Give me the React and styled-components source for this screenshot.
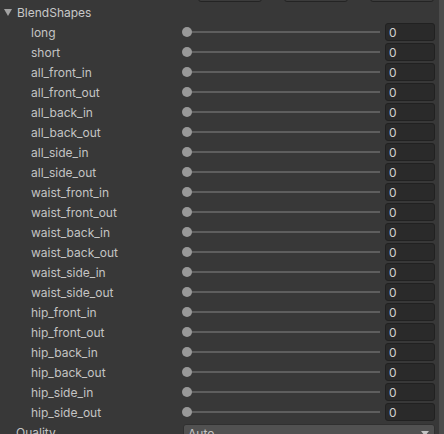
import React from 'react'
import styled, { createGlobalStyle } from 'styled-components'

const shapes = [
    'long', 'short',
    'all_front_in', 'all_front_out', 'all_back_in', 'all_back_out', 'all_side_in', 'all_side_out',
    'waist_front_in', 'waist_front_out', 'waist_back_in', 'waist_back_out', 'waist_side_in', 'waist_side_out',
    'hip_front_in', 'hip_front_out', 'hip_back_in', 'hip_back_out', 'hip_side_in', 'hip_side_out',
]

const GlobalStyle = createGlobalStyle`
    html, body {
        margin: 0;
        padding: 0;
        background: #383838;
        overflow: hidden;
    }
    body {
        font-family: Inter, "Noto Sans", "DejaVu Sans", sans-serif;
        font-size: 12px;
        color: #c4c4c4;
    }
`

export default function App() {
    return (
        <>
            <GlobalStyle />
            <Window>
                <Inspector>
                    <ButtonStrip>
                        <StripButton />
                        <StripButton />
                        <StripButton />
                    </ButtonStrip>

                    <Foldout>
                        <Arrow viewBox="0 0 8 7">
                            <polygon points="0,0 8,0 4,7" fill="#a3a3a3" />
                        </Arrow>
                        BlendShapes
                    </Foldout>

                    {shapes.map((name) => (
                        <Row key={name}>
                            <Label>{name}</Label>
                            <Slider>
                                <Knob />
                                <Track />
                            </Slider>
                            <NumberField>0</NumberField>
                        </Row>
                    ))}

                    <Row>
                        <Label $indent={16}>Quality</Label>
                        <Dropdown>
                            <span>Auto</span>
                            <Caret viewBox="0 0 8 5">
                                <polygon points="0,0 8,0 4,5" fill="#c4c4c4" />
                            </Caret>
                        </Dropdown>
                    </Row>
                </Inspector>
                <ScrollStrip />
            </Window>
        </>
    )
}

const Window = styled.div`
    display: flex;
    width: 444px;
    height: 434px;
    overflow: hidden;
`

const Inspector = styled.div`
    flex: 1;
    display: flex;
    flex-direction: column;
    padding-right: 4px;
    overflow: hidden;
`

const ScrollStrip = styled.div`
    width: 5px;
    flex: none;
    background: #4b4b4b;
`

const ButtonStrip = styled.div`
    flex: none;
    height: 2px;
    display: flex;
    align-items: flex-end;
    overflow: hidden;
    padding-left: 198px;
    gap: 22px;
`

const StripButton = styled.div`
    flex: none;
    width: 64px;
    height: 20px;
    background: #3c3c3c;
    border: 1px solid #242424;
    border-radius: 3px;
    box-sizing: border-box;
`

const Foldout = styled.div`
    flex: none;
    height: 20px;
    display: flex;
    align-items: center;
    padding-left: 4px;
    padding-top: 1px;
    box-sizing: border-box;
    color: #c8c8c8;
`

const Arrow = styled.svg`
    width: 8px;
    height: 7px;
    margin-right: 5px;
`

const Row = styled.div`
    flex: none;
    height: 20px;
    display: flex;
    align-items: center;
`

const Label = styled.div`
    width: 182px;
    flex: none;
    box-sizing: border-box;
    padding-left: ${(p) => p.$indent ?? 31}px;
    white-space: nowrap;
    color: #c4c4c4;
`

const Slider = styled.div`
    flex: 1;
    position: relative;
    height: 10px;
    display: flex;
    align-items: center;
    margin-right: 5px;
`

const Track = styled.div`
    position: absolute;
    left: 5px;
    right: 0;
    height: 2px;
    background: #5e5e5e;
`

const Knob = styled.div`
    position: relative;
    z-index: 1;
    width: 10px;
    height: 10px;
    border-radius: 50%;
    background: #999999;
`

const NumberField = styled.div`
    width: 50px;
    height: 18px;
    box-sizing: border-box;
    background: #2a2a2a;
    border: 1px solid #212121;
    border-radius: 3px;
    padding-left: 3px;
    display: flex;
    align-items: center;
    color: #d2d2d2;
`

const Dropdown = styled.div`
    flex: 1;
    height: 18px;
    margin-left: 1px;
    align-self: flex-end;
    box-sizing: border-box;
    background: #515151;
    border: 1px solid #303030;
    border-radius: 3px;
    padding: 0 5px 0 4px;
    display: flex;
    align-items: center;
    justify-content: space-between;
    color: #c4c4c4;
`

const Caret = styled.svg`
    width: 8px;
    height: 5px;
`
